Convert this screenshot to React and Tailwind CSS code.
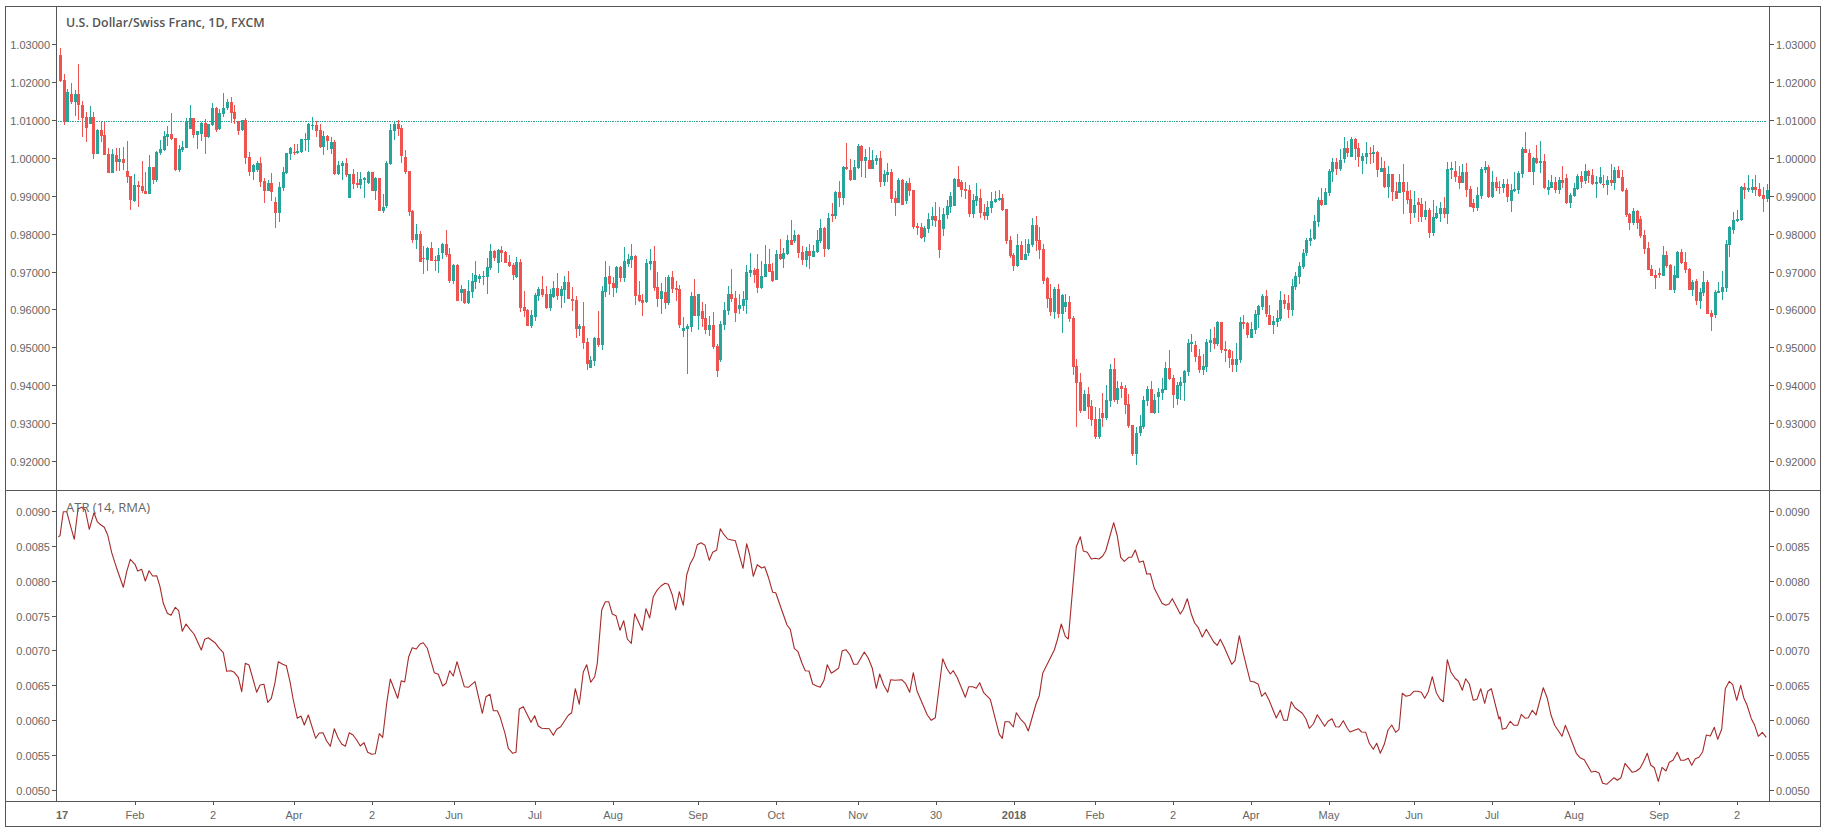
import React from "react";

const SEG = [
  [0, "r144 165 243 246|r222 240 362 375|g267 276 365 365|r249 282 306 312|g270 282 306 348|r192 282 315 360|r303 315 353 411|r336 351 384 426|g318 351 372 372|r336 351 462 477|g387 390 462 462|r363 390 408 426|r366 405 465 465|r444 462 519 519|g447 462 519 519|r444 465 486 513|g444 477 486 513|r441 477 489 510|r423 513 531 549|r528 528 600 630|g522 555 603 606|r543 555 561 621|r483 558 573 579|r516 573 582 582|g465 501 582 582|r501 501 540 552|g453 456 540 546|g420 447 459 465|g393 408 450 453|g378 402 411 438|r339 402 417 420|r414 414 510 513|g435 447 510 516|g423 441 450 456|g354 363 444 444|g315 354 387 387|r354 354 405 414|g393 393 405 447|g366 369 402 423|r357 369 411 462|g372 372 411 414|g309 324 375 378|r321 324 390 396|g327 339 387 390|g279 324 342 351|g297 306 324 330|r291 306 339 369|r315 336 357 372|r363 363 393 405|g360 360 390 393|r354 360 474 492|r456 471 516 528|g492 495 516 540|g483 489 510 516|r471 489 546 561|r534 543 573 609|g540 549 573 573|r519 549 576 603|r591 606 639 684|g546 561 639 666|g501 516 564 573|g459 459 519 522|g441 444 462 480|r432 456 459 465|g432 453 459 462|g417 417 456 459|g399 417 420 453|g369 372 420 456|g351 375 378 390|r363 375 393 411|r372 390 441 444|g393 408 441 465|r405 408 423 450|g411 426 447 462|r420 426 522 525|g483 495 522 525|g483 489 498 540|r474 489 525 531|g522 522 594 594|r507 522 552 567|r516 549 555 564|g516 537 555 567|g531 534 540 594|g513 516 549 552|r516 516 573 573|g531 534 573 600|r534 534 633 633|g582 621 633 639|g483 489 618 624|g372 390 492 495|g363 372 393 420|r360 372 387 408|r375 384 468 489|r450 471 516 522|r513 513 636 648|r630 633 720 729"],
  [210, "g42 72 90 117|r63 72 156 156|r108 144 147 192|g111 114 150 183|r96 114 153 153|r138 150 153 183|g114 135 153 189|g99 102 129 147|r60 102 135 141|r114 132 213 219|g162 165 213 222|r162 165 273 273|g225 237 249 273|r237 237 279 282|g210 243 279 282|g189 213 246 264|g153 195 216 237|g192 198 207 219|g183 198 201 225|g144 171 201 252|g102 123 174 180|r120 123 144 153|g117 120 159 189|r108 120 129 156|r123 126 159 159|r135 156 168 171|r159 165 195 210|g141 156 201 204"],
  [100, "r477 486 624 636|r573 621 633 651|r627 630 678 678|g630 645 678 684|g579 585 651 663|g561 567 588 603|r528 567 585 591|r558 582 624 627|g567 582 624 633|g543 564 591 594|r519 564 588 600|g558 567 588 624|g528 546 570 609|r513 546 597 597|r561 597 603 633|r588 600 687 714|g672 678 687 708|r606 678 729 747|r714 726 792 810|g768 780 804 804|g711 714 783 798|r633 714 735 741|g558 573 735 750|g483 531 576 591|r498 528 552 585|r531 549 564 591|g498 501 564 579|r498 501 534 546|g441 483 534 546|g462 477 492 501|g432 468 480 504|r465 468 588 615|r543 585 603 606|r582 600 609 648|g477 489 606 609|g447 483 492 510|r438 483 564 573|r516 561 597 621|g549 573 597 642|r531 576 609 627|g525 531 609 615|r513 531 567 579|r543 564 570 603|r555 567 675 684|g651 684 693 711|g672 678 687 822|g576 588 681 696|r537 588 648 648|g582 582 648 690|r606 633 657 681|r612 654 690 702|g648 675 690 708|r636 675 741 747|r732 738 813 831|g663 672 780 786|g606 630 675 690|g558 582 633 645|r507 582 597 606|r573 594 639 666|g582 615 627 642|g573 597 618 633|g495 516 600 642|g459 510 519 531|r504 510 525 549|r462 507 564 579|g483 528 564 567|g435 492 531 531|r447 492 516 516|r489 513 543 546|g450 462 540 540|r417 462 477 480|g444 459 477 504|g405 420 462 465|r360 420 435 435|g390 405 423 429|r402 405 459 474|r438 456 480 495|g441 453 480 501|r432 453 468 507|g435 453 471 471|g390 420 456 459|g357 384 423 429|r381 384 447 471|g339 354 447 450|r309 342 348 366|g273 276 348 357|r243 276 294 321|g198 201 294 315|r129 201 207 210|r177 210 240 243|g180 201 240 240|g132 138 204 207|r135 138 183 231|g147 171 183 234|r141 180 207 207|g150 180 207 207|g165 174 183 195|r153 174 246 261|g210 222 246 258|g189 216 225 246|r207 216 297 309|r273 294 309 348|g234 240 309 309|r237 240 315 315|g243 249 303 312|r234 249 273 288|r270 270 381 387|r369 378 384 405|r369 381 414 417|g378 384 411 426|g339 357 387 399|g321 348 360 378|r306 348 363 381|r321 360 450 474|g324 342 387 408|g300 318 345 357"],
  [130, "g186 198 231 249|g144 147 228 228|r108 147 171 171|r150 156 180 201|r156 177 183 207|r165 180 252 261|g192 210 252 264|g159 198 213 228|r177 204 249 264|r222 246 258 270|g213 231 258 270|g186 213 234 249|g183 207 216 219|g180 204 210 213|r192 204 240 243"],
  [200, "r27 27 123 132|r108 120 168 174|r159 165 198 213|g102 135 198 201|r123 135 180 180|g117 162 180 180|g117 132 159 168|g54 75 135 141|r48 75 123 153|r81 120 150 177|r132 147 243 252|r231 234 297 324|r252 294 336 348|g261 267 336 357|r252 267 342 354|g282 285 342 399|g282 306 321 336|r288 306 357 366|r348 354 501 525|r477 498 549 681|r519 546 633 639|g570 582 633 633|r561 582 621 657|r600 618 660 678|r621 657 711 717|g624 657 711 717|r579 639 654 681|g555 600 654 660|g492 507 603 621|r474 507 600 606|g543 564 600 612|r546 558 567 594|r555 564 615 642|r582 612 678 684|r675 675 762 768|g681 699 762 795|g645 678 699 708|g588 600 681 687|g558 567 603 618|r543 567 639 639|g582 600 639 642|g564 576 591 639|g534 567 579 600|g486 504 570 570|r450 504 537 540|r525 534 585 624|g546 555 597 615|g531 546 558 600|g510 513 549 603|g417 429 516 528|g402 426 432 456|r423 435 471 486|r447 468 510 519|g462 498 510 525|g417 426 501 516|g387 420 429 456|r381 414 432 447|g363 366 432 438|r366 366 450 459|r423 447 453 486|r447 450 474 504|r453 477 495 516|g429 477 495 516|g351 366 480 489|r345 366 372 387|r366 369 405 414|g366 387 414 414|g330 342 390 402|g315 318 345 384|g282 288 321 330|r270 288 342 351|r315 345 375 375|g348 363 375 402|g330 354 366 381|g273 300 357 363|r282 300 312 327|r285 309 330 354|g237 258 330 348|g216 228 261 270|g186 198 231 252|g147 159 201 207|g114 120 159 168|g87 114 123 138|g45 63 117 120|g-9 0 66 81"],
  [120, "r204 240 255 258|g204 216 255 255|g147 153 219 228|g114 126 156 186|r114 126 147 165|g87 120 147 153|g51 84 117 129|r63 84 99 111|g51 57 111 111|r54 57 87 120|r69 84 111 141|g99 108 123 162|g66 99 111 132|r81 99 102 132|g75 96 102 129|r93 96 150 171|g111 144 156 156|r123 144 201 204|g138 162 201 234|r162 162 216 243|r186 213 237 237|g162 186 219 219"],
  [100, "r192 246 276 342|r246 273 300 312|r270 297 339 372|g273 315 339 354|r294 306 315 366|r294 312 351 366|g303 330 351 360|r324 330 399 414|g300 351 399 408|g318 339 354 357|g306 324 342 366|r291 324 342 354|g186 207 342 372|g186 204 210 237|r183 213 231 246|r198 228 249 267|g192 216 249 249|r189 216 270 291|r258 267 321 321|r297 309 324 336|g261 285 324 333|g201 207 288 297|g183 201 210 219|r195 201 291 294|g213 246 291 294|r231 246 264 273|r243 261 264 282|g237 252 264 279|r237 252 291 306|g252 270 303 336|g216 267 273 276|g213 219 270 282|g141 147 222 234|r96 147 159 159|r147 159 216 216|g171 174 216 255|r135 174 189 192|g123 183 189 219|r162 183 264 267|g240 261 270 285|g225 246 264 264|r231 246 270 279|g231 240 270 282|r198 240 249 264|r222 234 309 312|g279 285 309 324|g249 264 288 291|g222 228 267 270|r213 228 246 264|g192 213 243 252|r210 213 228 249|r207 225 252 255|g228 246 252 294|g201 231 249 252|r225 252 255 264|g228 240 255 285|r192 240 249 258|g201 210 249 270|r198 210 234 234|r210 231 273 276|r264 270 345 351|r339 342 369 390|g324 333 369 375|r330 333 369 387|r348 357 408 414|r390 405 447 462|r426 444 510 510|r495 507 528 528|r510 525 534 567|r504 519 525 534|g438 465 528 528|r453 465 498 504|r492 495 570 570|g498 525 570 579|g453 456 534 534|r447 456 489 492|r456 486 510 519|r504 507 570 570|g540 546 570 588|r537 543 603 615|g564 576 603 627|g513 546 579 588|r540 546 642 642|r630 639 651 693|g570 576 645 654|g546 573 579 579|g513 561 576 600|g420 432 564 576|g378 381 435 471|g336 360 390 402|g330 357 363 366|g258 261 360 363|r249 261 270 297|g225 264 270 276|g237 261 270 279|r225 261 270 288|r249 267 288 291|r261 285 297 336|g252 270 297 306"],
];

const candles = [];
SEG.forEach(([off, s]) => {
  s.split("|").forEach((t) => {
    const [h, a, b, l] = t.slice(1).split(" ").map((v) => off + Number(v) / 3);
    candles.push({ c: t[0], h, a, b, l });
  });
});
const STEP = 1706.6 / (candles.length - 1);

const ATR_SEG = [
  [0, 470, "175,200 180,197 190,125 200,125 212,170 223,208 234,117 245,112 256,120 268,178 282,128 292,155 300,163 313,172 323,195 335,248 350,295 370,352 380,305 391,268 405,283 413,303 425,298 436,333 447,302 458,318 470,317 480,350 490,400 502,430 513,436 526,412 536,422 547,484 558,462 570,478 582,492 604,540 614,508 625,503 645,518 658,535 670,548 680,604 692,602 703,607 715,622 725,665 736,580 747,585 770,667 780,645 792,643 803,697 814,685 825,638 835,575 848,583 859,587 870,635 880,690 892,745 903,738 913,765 925,735 947,805 958,789 969,788 980,813 991,829 1003,776 1014,803 1025,822 1036,829 1048,788 1059,795 1070,810 1081,828 1092,818 1103,847 1115,853 1126,851 1138,791 1148,802 1160,700 1171,627 1193,685 1204,632 1214,636 1226,560 1237,533 1249,537 1260,522 1270,518 1282,535 1303,608 1315,613 1328,648 1338,640 1349,602 1360,618 1371,575 1393,650 1405,652 1425,635 1447,730 1458,680 1470,673 1480,722 1492,722"],
  [500, 500, "0,650 15,700 25,745 38,760 48,757 58,627 70,620 93,667 104,647 115,678 125,685 148,686 160,706 170,688 182,680 205,646 215,638 226,566 238,613 250,516 260,494 272,547 284,530 292,490 305,330 316,305 326,305 337,342 348,347 360,391 371,362 382,417 394,430 404,341 427,391 438,326 449,354 460,290 470,272 483,258 495,250 505,253 517,285 527,330 538,275 550,316 560,225 570,193 582,170 592,134 603,128 615,136 628,181 638,157 650,150 661,86 672,104 683,117 706,122 729,205 740,131 749,165 760,229 772,194 785,204 794,200 806,235 818,277 827,278 861,375 871,388 883,445 894,455 906,490 916,512 927,513 938,552 950,558 961,562 972,541 982,494 994,520 1005,512 1016,504 1027,452 1038,449 1050,465 1061,493 1072,493 1093,456 1105,475 1117,505 1129,565 1139,522 1151,555 1163,577 1172,539 1185,541 1205,539 1217,551 1229,577 1240,518 1251,573 1282,645 1294,661 1306,653 1328,476 1340,505 1351,522 1360,512 1372,533 1396,592 1406,560 1418,560 1429,565 1439,548 1451,578 1471,598 1498,703"],
  [1000, 500, "7,715 15,665 27,665 40,681 49,638 62,658 74,670 85,693 108,612 118,587 128,520 163,450 172,420 184,372 196,409 205,417 229,140 241,110 250,153 262,157 274,177 285,175 297,177 308,168 317,153 341,68 352,108 362,172 373,184 386,172 395,172 406,150 418,187 430,183 440,222 451,221 463,265 486,310 497,316 507,312 517,296 541,342 550,328 562,296 574,342 584,369 595,383 607,411 619,388 641,426 652,436 661,418 671,438 695,493 705,482 718,407 730,460 741,505 751,544 763,546 775,553 785,589 796,578 807,600 829,654 841,630 851,661 862,661 874,605 885,623 907,640 918,657 928,685 940,672 952,644 974,679 984,664 996,656 1007,680 1018,681 1030,662 1042,685 1050,696 1075,686 1085,696 1097,697 1108,730 1120,748 1130,730 1141,760 1153,733 1164,690 1175,675 1187,697 1197,688 1207,580 1218,589 1230,586 1241,574 1253,574 1264,577 1274,595 1285,575 1297,530 1309,578 1320,597 1330,605 1342,479 1352,515 1365,535 1375,543 1387,571 1397,536 1408,552 1420,601 1431,598 1442,566 1454,610 1463,574 1474,566 1497,657"],
  [1500, 620, "0,290 7,328 18,325 31,304 42,316 53,316 64,283 76,295 85,293 97,271 108,285 130,203 142,235 153,285 164,316 186,349 196,316 208,345 229,400 240,413 253,419 274,456 286,454 297,459 308,490 320,493 342,473 352,481 363,473 375,430 397,457 408,454 420,445 430,427 442,400 452,435 463,443 475,484 486,442 498,453 508,427 519,421 532,397 542,421 553,421 565,415 575,436 586,416 597,412 608,395 619,345 631,348 643,322 653,358 665,328 676,206 688,184 698,194 710,241 722,196 731,233 741,255 754,296 764,316 775,349 787,337 799,352"],
];
const atrPoints = ATR_SEG.flatMap(([ox, oy, s]) =>
  s.split(" ").map((p) => {
    const [x, y] = p.split(",").map(Number);
    return `${(ox + x / 3).toFixed(1)},${(oy + y / 3).toFixed(1)}`;
  })
).join(" ");

const PRICES = ["1.03000","1.02000","1.01000","1.00000","0.99000","0.98000","0.97000","0.96000","0.95000","0.94000","0.93000","0.92000"];
const ATRS = ["0.0090","0.0085","0.0080","0.0075","0.0070","0.0065","0.0060","0.0055","0.0050"];
const TIME = [
  [62, "17", true, true],[135, "Feb"],[213, "2"],[294, "Apr"],[372, "2"],[454, "Jun"],[535, "Jul"],[613, "Aug"],[698, "Sep"],[776, "Oct"],[858, "Nov"],[936, "30"],[1014, "2018", true],[1095, "Feb"],[1173, "2"],[1251, "Apr"],[1329, "May"],[1414, "Jun"],[1492, "Jul"],[1574, "Aug"],[1659, "Sep"],[1737, "2"],[1769, ""],
];

function LeftAxis({ labels, rowH, pad }) {
  return (
    <div className={`w-[51px] shrink-0 flex flex-col items-stretch border-r border-[#555] ${pad}`}>
      {labels.map((t) => (
        <div key={t} className={`${rowH} shrink-0 flex items-center justify-end gap-[2px]`}>
          <span className="translate-y-px text-[11px] leading-none text-[#666] font-['Liberation_Sans',Arial,sans-serif]">{t}</span>
          <span className="w-[4px] h-px bg-[#555]" />
        </div>
      ))}
    </div>
  );
}

function RightAxis({ labels, rowH, pad }) {
  return (
    <div className={`w-[51px] shrink-0 flex flex-col items-stretch border-l border-[#555] ${pad}`}>
      {labels.map((t) => (
        <div key={t} className={`${rowH} shrink-0 flex items-center justify-start gap-[2px]`}>
          <span className="w-[4px] h-px bg-[#555]" />
          <span className="translate-y-px text-[11px] leading-none text-[#666] font-['Liberation_Sans',Arial,sans-serif]">{t}</span>
        </div>
      ))}
    </div>
  );
}

function PriceChart() {
  return (
    <svg className="block w-[1712px] h-[483px]" viewBox="57 7 1712 483" shapeRendering="crispEdges">
      <line x1="58" x2="1767" y1="121.5" y2="121.5" stroke="#26a69a" strokeWidth="1" strokeDasharray="1.4 1" />
      {candles.map((k, i) => {
        const cx = 60.4 + STEP * i;
        const col = k.c === "r" ? "#ef5350" : "#26a69a";
        const wx = Math.round(cx - 0.5);
        return (
          <g key={i} fill={col}>
            <rect x={wx} y={Math.round(k.h)} width="1" height={Math.max(1, Math.round(k.l) - Math.round(k.h))} />
            <rect x={wx - 1} y={Math.round(k.a)} width="3" height={Math.max(1, Math.round(k.b) - Math.round(k.a))} />
          </g>
        );
      })}
    </svg>
  );
}

function AtrChart() {
  return (
    <svg className="block w-[1712px] h-[310px]" viewBox="57 491 1712 310">
      <polyline points={atrPoints} fill="none" stroke="#a52a2a" strokeWidth="1.1" strokeLinejoin="round" />
    </svg>
  );
}

export default function App() {
  const cells = TIME.slice(0, -1).map((t, i) => ({ ...t, x: t[0], w: TIME[i + 1][0] - t[0] }));
  return (
    <div className="w-[1826px] h-[832px] bg-white pl-[5px] pt-[6px] overflow-hidden">
      <div className="w-[1816px] h-[821px] border border-[#555] flex flex-col">
        <div className="h-[484px] flex border-b border-[#555] overflow-hidden">
          <LeftAxis labels={PRICES} rowH="h-[37.86px]" pad="pt-[19px]" />
          <div className="relative flex-1 min-w-0">
            <PriceChart />
            <div className="absolute left-[9px] top-[6px] text-[12.4px] leading-[20px] font-semibold text-[#555] font-['Open_Sans',sans-serif] whitespace-nowrap">
              U.S. Dollar/Swiss Franc, 1D, FXCM
            </div>
          </div>
          <RightAxis labels={PRICES} rowH="h-[37.86px]" pad="pt-[19px]" />
        </div>
        <div className="h-[311px] flex border-b border-[#555] overflow-hidden">
          <LeftAxis labels={ATRS} rowH="h-[34.87px]" pad="pt-[3px]" />
          <div className="relative flex-1 min-w-0">
            <AtrChart />
            <div className="absolute left-[9px] top-[6px] text-[13px] leading-[20px] text-[#666] font-['Open_Sans',sans-serif] whitespace-nowrap">
              ATR (14, RMA)
            </div>
          </div>
          <RightAxis labels={ATRS} rowH="h-[34.87px]" pad="pt-[3px]" />
        </div>
        <div className="flex-1 flex">
          <div className="w-[51px] shrink-0" />
          <div className="flex-1 min-w-0 flex pl-[5px]">
            {cells.map((c, i) => (
              <div key={i} className="shrink-0 flex flex-col items-start" style={{ width: c.w }}>
                {c[3] ? <span className="h-[3px]" /> : <span className="w-px h-[3px] bg-[#555]" />}
                <span className={`h-[20px] flex items-center -translate-x-1/2 text-[11px] text-[#666] font-['Liberation_Sans',Arial,sans-serif] ${c[2] ? "font-bold" : ""}`}>
                  {c[1]}
                </span>
              </div>
            ))}
          </div>
          <div className="w-[51px] shrink-0" />
        </div>
      </div>
    </div>
  );
}
